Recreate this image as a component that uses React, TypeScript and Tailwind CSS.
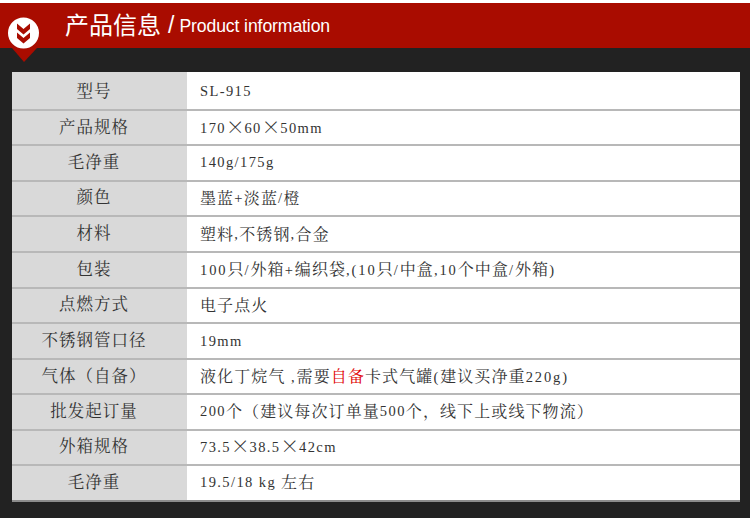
import type { ReactNode } from "react";

function T({ s }: { s: string }) {
  return (
    <>
      {s.split(/([\u2E80-\u9FFF\uFF00-\uFFEF]+|×)/).map((p, i) =>
        p === "×" ? (
          <span key={i} className="inline-block -translate-y-[2px] text-[18.500px] leading-none tracking-[0px] font-['Noto_Sans_CJK_SC'] font-light">×</span>
        ) : /[\u2E80-\u9FFF\uFF00-\uFFEF]/.test(p) ? (
          <span key={i} className="text-[16px] tracking-[1.100px]">{p}</span>
        ) : (
          <span key={i}>{p}</span>
        )
      )}
    </>
  );
}

const rows: [string, ReactNode, string][] = [
  ["型号", <T s="SL-915" />, "h-[37px] pt-[3px]"],
  ["产品规格", <T s="170×60×50mm" />, "h-[35px] pt-[2px]"],
  ["毛净重", <T s="140g/175g" />, "h-[36px]"],
  ["颜色", <T s="墨蓝+淡蓝/橙" />, "h-[35px]"],
  ["材料", <T s="塑料,不锈钢,合金" />, "h-[36px] pt-[1px]"],
  ["包装", <span className="tracking-[1.900px]"><T s="100只/外箱+编织袋,(10只/中盒,10个中盒/外箱)" /></span>, "h-[36px]"],
  ["点燃方式", <T s="电子点火" />, "h-[35px]"],
  ["不锈钢管口径", <T s="19mm" />, "h-[36px] pt-[1px]"],
  ["气体（自备）", <span className="tracking-[1.900px]"><T s="液化丁烷气 ,需要" /><span className="text-[#e00000]"><T s="自备" /></span><T s="卡式气罐(建议买净重220g)" /></span>, "h-[35px] pt-[1px]"],
  ["批发起订量", <T s="200个（建议每次订单量500个，线下上或线下物流）" />, "h-[36px]"],
  ["外箱规格", <T s="73.5×38.5×42cm" />, "h-[35px]"],
  ["毛净重", <T s="19.5/18 kg 左右" />, "h-[36px]"],
];

export default function App() {
  return (
    <div className="w-[750px] h-[518px] overflow-hidden bg-[#222222] relative" style={{ fontFamily: '"Liberation Serif","Noto Serif CJK SC","Noto Sans CJK SC",serif' }}>
      <div className="h-[3px] bg-white" />
      <header className="h-[45px] bg-[#a90c00] flex items-center pl-[65px] text-white" style={{ fontFamily: '"Liberation Sans","Noto Sans CJK SC",sans-serif' }}>
        <span className="text-[24px] leading-none">产品信息</span>
        <span className="text-[23px] leading-none ml-[7px]">/</span>
        <span className="text-[17.600px] leading-none ml-[5px] tracking-[-0.1px] mt-[2px]">Product information</span>
      </header>
      <svg className="absolute left-0 top-[3px]" width="50" height="60" viewBox="0 0 50 60">
        <path d="M12 45 L24 59 L37 45 Z" fill="#a90c00" />
        <circle cx="23.500" cy="30" r="15.500" fill="#ffffff" />
        <path d="M17 20.500 L23.500 26 L30 20.500 V26 L23.500 31.500 L17 26 Z" fill="#a90c00" />
        <path d="M17 29.500 L23.500 35 L30 29.500 V35 L23.500 40.500 L17 35 Z" fill="#a90c00" />
      </svg>
      <div className="ml-[12px] mt-[24px] w-[728px] border-b-2 border-[#8c8c8c]">
        {rows.map(([label, value, h], i) => (
          <div key={i} className={`flex ${h} bg-[linear-gradient(90deg,#d9d9d9_175px,#ffffff_175px)] ${i ? "border-t-2 border-[#b8b8b8]" : ""}`}>
            <div className="w-[175px] shrink-0 flex items-center justify-center pr-[11px] text-[16.500px] tracking-[1px] text-[#333333]">{label}</div>
            <div className="flex-1 flex items-center pl-[13px] text-[14.500px] tracking-[1.400px] text-[#333333] whitespace-pre">{value}</div>
          </div>
        ))}
      </div>
    </div>
  );
}
